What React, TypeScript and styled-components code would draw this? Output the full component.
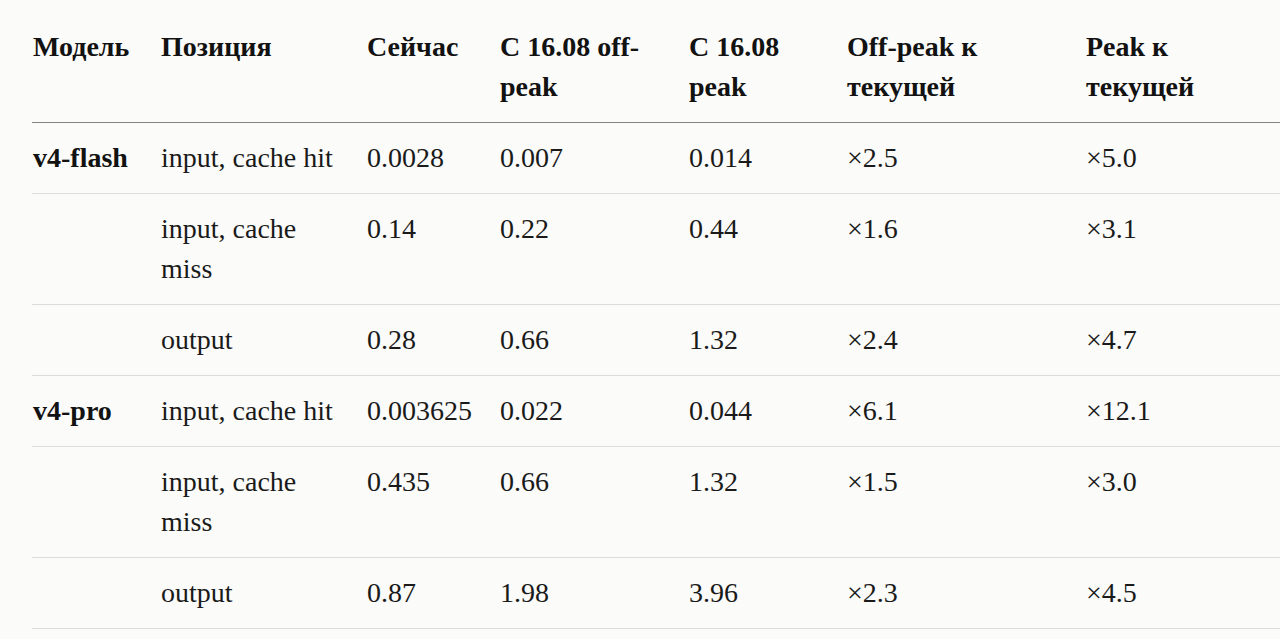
import React from "react";
import styled, { createGlobalStyle } from "styled-components";

const Global = createGlobalStyle`
  html, body { margin: 0; padding: 0; background: #fbfbf9; }
  body { font-family: "Liberation Serif", "Times New Roman", serif; color: #1b1b1b; }
`;

const Page = styled.div`
  padding: 12px 0 0 32px;
  width: 1280px;
  box-sizing: border-box;
  overflow: hidden;
`;

const Table = styled.table`
  width: 1248px;
  table-layout: fixed;
  border-collapse: collapse;
  font-size: 28px;
  line-height: 40px;
`;

const HeadCell = styled.th`
  text-align: left;
  vertical-align: top;
  font-weight: 700;
  color: #121212;
  padding: 15px 16px 15px 1px;
  border-bottom: 1px solid #858585;
`;

const Cell = styled.td<{ $bold?: boolean }>`
  vertical-align: top;
  font-weight: ${(p) => (p.$bold ? 700 : 400)};
  color: ${(p) => (p.$bold ? "#121212" : "#1a1a1a")};
  padding: 15px 16px 15px 1px;
  border-bottom: 1px solid #dcdcd9;
`;

const cols = [128, 206, 133, 189, 158, 239, 195];

const headers = [
  "Модель",
  "Позиция",
  "Сейчас",
  "С 16.08 off-peak",
  "С 16.08 peak",
  "Off-peak к текущей",
  "Peak к текущей",
];

const rows: string[][] = [
  ["v4-flash", "input, cache hit", "0.0028", "0.007", "0.014", "×2.5", "×5.0"],
  ["", "input, cache miss", "0.14", "0.22", "0.44", "×1.6", "×3.1"],
  ["", "output", "0.28", "0.66", "1.32", "×2.4", "×4.7"],
  ["v4-pro", "input, cache hit", "0.003625", "0.022", "0.044", "×6.1", "×12.1"],
  ["", "input, cache miss", "0.435", "0.66", "1.32", "×1.5", "×3.0"],
  ["", "output", "0.87", "1.98", "3.96", "×2.3", "×4.5"],
];

export default function App() {
  return (
    <>
      <Global />
      <Page>
        <Table>
          <colgroup>
            {cols.map((w, i) => (
              <col key={i} style={{ width: w }} />
            ))}
          </colgroup>
          <thead>
            <tr>
              {headers.map((h) => (
                <HeadCell key={h}>{h}</HeadCell>
              ))}
            </tr>
          </thead>
          <tbody>
            {rows.map((r, i) => (
              <tr key={i}>
                {r.map((c, j) => (
                  <Cell key={j} $bold={j === 0}>
                    {c}
                  </Cell>
                ))}
              </tr>
            ))}
          </tbody>
        </Table>
      </Page>
    </>
  );
}
